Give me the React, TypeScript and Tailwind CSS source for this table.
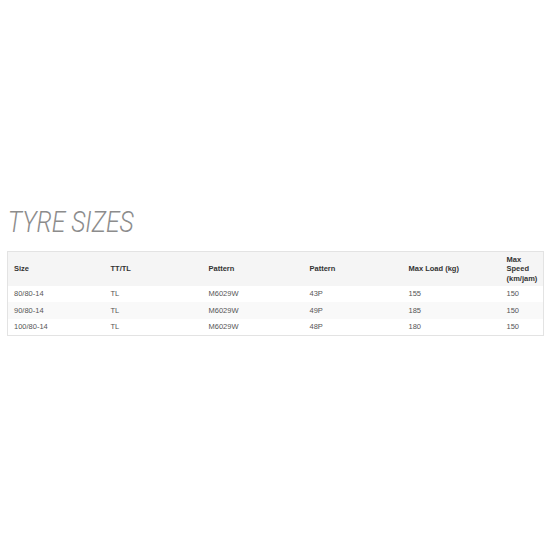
export default function App() {
  const rows = [
    ["80/80-14", "TL", "M6029W", "43P", "155", "150"],
    ["90/80-14", "TL", "M6029W", "49P", "185", "150"],
    ["100/80-14", "TL", "M6029W", "48P", "180", "150"],
  ]
  const widths = ["w-[97px]", "w-[98px]", "w-[101px]", "w-[99px]", "w-[98px]", "w-[43px]"]

  return (
    <main className="w-[550px] h-[550px] bg-white px-[7px] pt-[206px]">
      {/* TITLE */}
      <h2 className="pl-[1px] origin-left scale-x-[0.82] font-['Roboto',sans-serif] font-light italic text-[30px] leading-[32px] text-[#8c8c8c]">
        TYRE SIZES
      </h2>

      {/* TABLE */}
      <table className="mt-[13px] w-[536px] table-fixed border-collapse border border-[#e3e3e3] font-['Liberation_Sans',Arial,sans-serif] text-[7.5px]">
        <thead>
          <tr className="bg-[#f5f5f5] h-[34px] text-[#333]">
            {["Size", "TT/TL", "Pattern", "Pattern", "Max Load (kg)"].map((h, i) => (
              <th key={i} className={`${widths[i]} px-[6px] text-left font-bold align-middle`}>
                {h}
              </th>
            ))}
            <th className={`${widths[5]} px-[6px] text-left font-bold align-middle leading-[9.5px]`}>
              Max
              <br />
              Speed
              <br />
              (km/jam)
            </th>
          </tr>
        </thead>
        <tbody>
          {rows.map((r, i) => (
            <tr key={i} className={`h-[16.7px] text-[#555] ${i % 2 === 1 ? "bg-[#f9f9f9]" : "bg-white"}`}>
              {r.map((c, j) => (
                <td key={j} className="px-[6px] text-left align-middle">
                  {c}
                </td>
              ))}
            </tr>
          ))}
        </tbody>
      </table>
    </main>
  )
}
